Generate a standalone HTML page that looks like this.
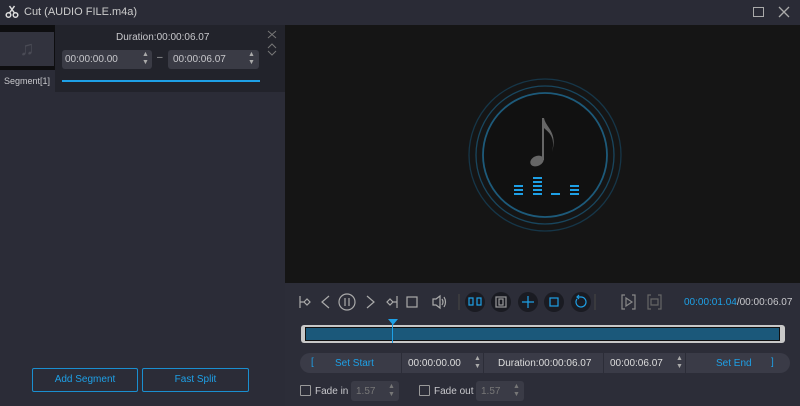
<!DOCTYPE html>
<html><head><style>
*{margin:0;padding:0;box-sizing:border-box}
body{width:800px;height:406px;background:#2c2d38;font-family:"Liberation Sans",sans-serif;font-size:10px;color:#c8c8cc;position:relative;overflow:hidden}
.a{position:absolute}
.blue{color:#1ea0e6}
.box{background:#3a3b46;border-radius:3px}
</style></head><body>
<div class="a" style="left:0;top:0;width:800px;height:25px;background:#2a2b36"></div>
<svg class="a" style="left:5px;top:5px" width="14" height="14" viewBox="0 0 14 14"><g stroke="#ddd" stroke-width="1.5" fill="none"><circle cx="3.5" cy="10" r="2.3"/><circle cx="10.5" cy="10" r="2.3"/><path d="M4.5 8L9.5 1M9.5 8L4.5 1"/></g></svg>
<div class="a" style="left:24px;top:6px;font-size:11px;color:#ccc">Cut (AUDIO FILE.m4a)</div>
<div class="a" style="left:753px;top:7px;width:11px;height:10px;border:1.3px solid #aaa"></div>
<svg class="a" style="left:778px;top:6px" width="12" height="12"><path d="M1 1L11 11M11 1L1 11" stroke="#aaa" stroke-width="1.3"/></svg>
<div class="a" style="left:0;top:25px;width:285px;height:381px;background:#2b2c37"></div>
<div class="a" style="left:0;top:25px;width:285px;height:67px;background:#22232b"></div>
<div class="a" style="left:0;top:25px;width:55px;height:45px;background:#0e0e10"></div>
<div class="a" style="left:0;top:32px;width:54px;height:34px;background:#32333e;color:#4a4b55;font-size:20px;text-align:center;line-height:34px">♫</div>
<div class="a" style="left:0;top:70px;width:55px;height:22px;background:#2b2c37;font-size:9px;line-height:22px;padding-left:4px">Segment[1]</div>
<div class="a" style="left:116px;top:32px;font-size:10px">Duration:00:00:06.07</div>
<div class="a box" style="left:62px;top:50px;width:90px;height:19px;background:#3a3b45;padding:4px 3px;font-size:10px">00:00:00.00</div>
<div class="a" style="left:142px;top:51px;font-size:7px;line-height:8px;color:#aaa">▲<br>▼</div>
<div class="a" style="left:157px;top:52px;color:#aaa">–</div>
<div class="a box" style="left:168px;top:50px;width:91px;height:19px;background:#3a3b45;padding:4px 5px;font-size:10px">00:00:06.07</div>
<div class="a" style="left:248px;top:51px;font-size:7px;line-height:8px;color:#aaa">▲<br>▼</div>
<svg class="a" style="left:267px;top:30px" width="10" height="30"><path d="M1 1L9 8M9 1L1 8M1 18L5 14L9 18M1 21L5 25L9 21" stroke="#777" fill="none"/></svg>
<div class="a" style="left:62px;top:80px;width:198px;height:2px;background:#1ea0e6"></div>
<div class="a blue" style="left:32px;top:368px;width:106px;height:24px;border:1px solid #1a8fd0;border-radius:2px;text-align:center;line-height:22px;font-size:10px">Add Segment</div>
<div class="a blue" style="left:142px;top:368px;width:107px;height:24px;border:1px solid #1a8fd0;border-radius:2px;text-align:center;line-height:22px;font-size:10px">Fast Split</div>
<div class="a" style="left:285px;top:25px;width:515px;height:258px;background:#151515"></div>
<svg class="a" style="left:460px;top:70px" width="170" height="170" viewBox="0 0 170 170">
<circle cx="85" cy="85" r="76" stroke="#163648" stroke-width="1.3" fill="none"/>
<circle cx="85" cy="85" r="69" stroke="#19465e" stroke-width="1.3" fill="none"/>
<circle cx="85" cy="85" r="62" stroke="#1d5a7a" stroke-width="1.8" fill="#111"/>
<path d="M83 48V90" stroke="#666" stroke-width="2"/>
<ellipse cx="77" cy="91" rx="7" ry="5" fill="#666" transform="rotate(-25 77 91)"/>
<path d="M84 48C86 58 98 62 92 82C96 66 88 62 84 58Z" fill="#666"/>
<g fill="#1ea0e6"><rect x="54" y="115" width="9" height="2"/><rect x="54" y="119" width="9" height="2"/><rect x="54" y="123" width="9" height="2"/>
<rect x="73" y="107" width="9" height="2"/><rect x="73" y="111" width="9" height="2"/><rect x="73" y="115" width="9" height="2"/><rect x="73" y="119" width="9" height="2"/><rect x="73" y="123" width="9" height="2"/>
<rect x="91" y="123" width="9" height="2"/>
<rect x="110" y="115" width="9" height="2"/><rect x="110" y="119" width="9" height="2"/><rect x="110" y="123" width="9" height="2"/></g>
</svg>
<svg class="a" style="left:295px;top:290px" width="510" height="24" viewBox="0 0 510 24" fill="none" stroke="#aaa" stroke-width="1.2">
<path d="M5 6V18M5 12H9M9 12L12 9L15 12L12 15Z"/>
<path d="M34 6L27 12L34 18"/>
<circle cx="52" cy="12" r="8"/><path d="M50 8V16M54 8V16"/>
<path d="M72 6L79 12L72 18"/>
<path d="M102 6V18M102 12H98M98 12L95 9L92 12L95 15Z"/>
<rect x="112" y="7" width="10" height="10"/>
<path d="M138 9H141L145 6V18L141 15H138ZM147 9Q149 12 147 15M149 7Q152 12 149 17"/>
<path d="M164 4V20" stroke="#444"/>
<circle cx="180" cy="12" r="10" fill="#1a1b22" stroke="none"/><path d="M174 8V15H178V8ZM182 8V15H186V8Z" stroke="#1ea0e6"/>
<circle cx="206" cy="12" r="10" fill="#1a1b22" stroke="none"/><rect x="201" y="7" width="10" height="10" stroke="#999"/><rect x="204" y="9" width="4" height="6" stroke="#999"/>
<circle cx="233" cy="12" r="10" fill="#1a1b22" stroke="none"/><path d="M233 6V18M227 12H239" stroke="#1ea0e6"/>
<circle cx="259" cy="12" r="10" fill="#1a1b22" stroke="none"/><rect x="255" y="8" width="8" height="8" stroke="#1ea0e6"/>
<circle cx="286" cy="12" r="10" fill="#1a1b22" stroke="none"/><path d="M282 9A5 5 0 1 0 286 7H283M284 5L282 7L284 9" stroke="#1ea0e6"/>
<path d="M300 4V20" stroke="#444"/>
<path d="M330 5H327V19H330M337 5H340V19H337M331 8L337 12L331 16Z" stroke="#888"/>
<path d="M356 5H353V19H356M363 5H366V19H363M356 9H363V15H356Z" stroke="#666"/>
</svg>
<div class="a" style="left:684px;top:297px;font-size:10px"><span class="blue">00:00:01.04</span>/00:00:06.07</div>
<div class="a" style="left:301px;top:325px;width:484px;height:18px;background:#c8c8c8;border-radius:3px"></div>
<div class="a" style="left:305px;top:327px;width:475px;height:14px;background:#1b587a;border:1px solid #111"></div>
<div class="a" style="left:392px;top:321px;width:1px;height:22px;background:#1ea0e6"></div>
<div class="a" style="left:388px;top:319px;width:0;height:0;border-left:5px solid transparent;border-right:5px solid transparent;border-top:6px solid #1ea0e6"></div>
<div class="a" style="left:300px;top:353px;width:490px;height:20px;background:#3a3b47;border-radius:10px"></div>
<div class="a" style="left:401px;top:353px;width:1px;height:20px;background:#2c2d38"></div>
<div class="a" style="left:483px;top:353px;width:1px;height:20px;background:#2c2d38"></div>
<div class="a" style="left:603px;top:353px;width:1px;height:20px;background:#2c2d38"></div>
<div class="a" style="left:685px;top:353px;width:1px;height:20px;background:#2c2d38"></div>
<div class="a blue" style="left:311px;top:357px">[</div>
<div class="a blue" style="left:335px;top:358px">Set Start</div>
<div class="a" style="left:408px;top:358px;color:#ddd">00:00:00.00</div>
<div class="a" style="left:474px;top:355px;font-size:7px;line-height:8px;color:#aaa">▲<br>▼</div>
<div class="a" style="left:498px;top:358px;color:#ddd">Duration:00:00:06.07</div>
<div class="a" style="left:610px;top:358px;color:#ddd">00:00:06.07</div>
<div class="a" style="left:676px;top:355px;font-size:7px;line-height:8px;color:#aaa">▲<br>▼</div>
<div class="a blue" style="left:716px;top:358px">Set End</div>
<div class="a blue" style="left:771px;top:357px">]</div>
<div class="a" style="left:300px;top:385px;width:11px;height:11px;border:1px solid #999;border-radius:1px"></div>
<div class="a" style="left:315px;top:386px">Fade in</div>
<div class="a box" style="left:351px;top:381px;width:48px;height:20px;padding:5px;color:#777">1.57</div>
<div class="a" style="left:388px;top:383px;font-size:7px;line-height:8px;color:#777">▲<br>▼</div>
<div class="a" style="left:419px;top:385px;width:11px;height:11px;border:1px solid #999;border-radius:1px"></div>
<div class="a" style="left:434px;top:386px">Fade out</div>
<div class="a box" style="left:476px;top:381px;width:48px;height:20px;padding:5px;color:#777">1.57</div>
<div class="a" style="left:513px;top:383px;font-size:7px;line-height:8px;color:#777">▲<br>▼</div>
</body></html>
